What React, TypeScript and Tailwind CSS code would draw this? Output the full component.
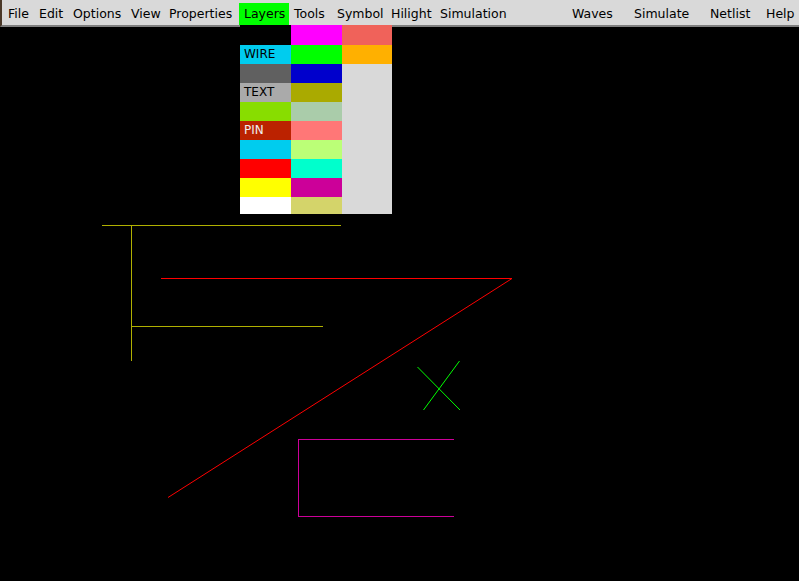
const leftMenus = [
  { label: "File", w: "w-[31px]" },
  { label: "Edit", w: "w-[34px]" },
  { label: "Options", w: "w-[58px]" },
  { label: "View", w: "w-[38px]" },
  { label: "Properties", w: "w-[75px]" },
  { label: "Layers", w: "w-[50px]", active: true },
  { label: "Tools", w: "w-[43px]" },
  { label: "Symbol", w: "w-[54px]" },
  { label: "Hilight", w: "w-[49px]" },
  { label: "Simulation", w: "w-[75px]" },
]

const rightMenus = [
  { label: "Waves", w: "w-[62px]" },
  { label: "Simulate", w: "w-[76px]" },
  { label: "Netlist", w: "w-[56px]" },
  { label: "Help", w: "w-[38px]" },
]

// layer palette, row by row: [col0, col1, col2]
const layerRows: { c: string[]; label?: string; dark?: boolean; h: string }[] = [
  { c: ["bg-black", "bg-[#ff00ff]", "bg-[#f0625a]"], h: "h-[20px]" },
  { c: ["bg-[#00ccee]", "bg-[#00ff00]", "bg-[#ffb000]"], label: "WIRE", h: "h-[19px]" },
  { c: ["bg-[#606060]", "bg-[#0000cc]", "bg-[#d9d9d9]"], h: "h-[19px]" },
  { c: ["bg-[#aaaaaa]", "bg-[#aaaa00]", "bg-[#d9d9d9]"], label: "TEXT", h: "h-[19px]" },
  { c: ["bg-[#88dd00]", "bg-[#aaccaa]", "bg-[#d9d9d9]"], h: "h-[19px]" },
  { c: ["bg-[#bb2200]", "bg-[#ff7777]", "bg-[#d9d9d9]"], label: "PIN", dark: true, h: "h-[19px]" },
  { c: ["bg-[#00ccee]", "bg-[#bbff77]", "bg-[#d9d9d9]"], h: "h-[19px]" },
  { c: ["bg-[#ff0000]", "bg-[#00ffcc]", "bg-[#d9d9d9]"], h: "h-[19px]" },
  { c: ["bg-[#ffff00]", "bg-[#cc0099]", "bg-[#d9d9d9]"], h: "h-[19px]" },
  { c: ["bg-white", "bg-[#d4d46a]", "bg-[#d9d9d9]"], h: "h-[17px]" },
]

function MenuItem({ label, w, active }: { label: string; w: string; active?: boolean }) {
  return (
    <div className={`${w} h-[22px] shrink-0 pl-[5px] leading-[22px] ${active ? "bg-[#00ff00]" : ""}`}>{label}</div>
  )
}

function LayerPalette() {
  return (
    <div className="absolute left-[240px] top-[25px] flex w-[152px] flex-col">
      {layerRows.map((row, i) => (
        <div key={i} className={`flex ${row.h}`}>
          <div
            className={`flex w-[51px] items-center pb-[1px] pl-[4px] text-[12px] ${row.c[0]} ${row.dark ? "text-[#eeeeee]" : "text-black"}`}
          >
            {row.label}
          </div>
          <div className={`w-[51px] ${row.c[1]}`} />
          <div className={`w-[50px] ${row.c[2]}`} />
        </div>
      ))}
    </div>
  )
}

function Schematic() {
  return (
    <svg className="absolute inset-0" width="799" height="581" shapeRendering="crispEdges">
      {/* yellow wires */}
      <line x1="102" y1="225.5" x2="341" y2="225.5" stroke="#b0b000" strokeWidth="1" />
      <line x1="131.5" y1="225" x2="131.5" y2="361" stroke="#b0b000" strokeWidth="1" />
      <line x1="131" y1="326.5" x2="323" y2="326.5" stroke="#b0b000" strokeWidth="1" />
      {/* red */}
      <line x1="161" y1="278.5" x2="512" y2="278.5" stroke="#ff0000" strokeWidth="1" />
      <line x1="512" y1="278.5" x2="168" y2="497.5" stroke="#ff0000" strokeWidth="1" shapeRendering="auto" />
      {/* green cross */}
      <line x1="417.5" y1="367" x2="460" y2="410" stroke="#00ff00" strokeWidth="1" shapeRendering="auto" />
      <line x1="459.5" y1="361" x2="423.5" y2="410" stroke="#00ff00" strokeWidth="1" shapeRendering="auto" />
      {/* magenta box, open on the right */}
      <polyline points="454,439.5 298.5,439.5 298.5,516.5 454,516.5" fill="none" stroke="#cc0099" strokeWidth="1" />
    </svg>
  )
}

export default function App() {
  return (
    <div className="relative flex h-[581px] w-[799px] flex-col overflow-hidden bg-black font-['DejaVu_Sans',sans-serif]">
      <div className="flex h-[27px] shrink-0 border-b-2 border-l-2 border-b-[#7f7f7f] border-l-[#4a3828] bg-[#d9d9d9] pt-[3px] text-[12.5px] text-black">
        <div className="flex pl-[1px]">
          {leftMenus.map((m) => (
            <MenuItem key={m.label} {...m} />
          ))}
        </div>
        <div className="flex-1" />
        <div className="flex">
          {rightMenus.map((m) => (
            <MenuItem key={m.label} {...m} />
          ))}
        </div>
      </div>
      <div className="flex-1" />
      <Schematic />
      <LayerPalette />
    </div>
  )
}
